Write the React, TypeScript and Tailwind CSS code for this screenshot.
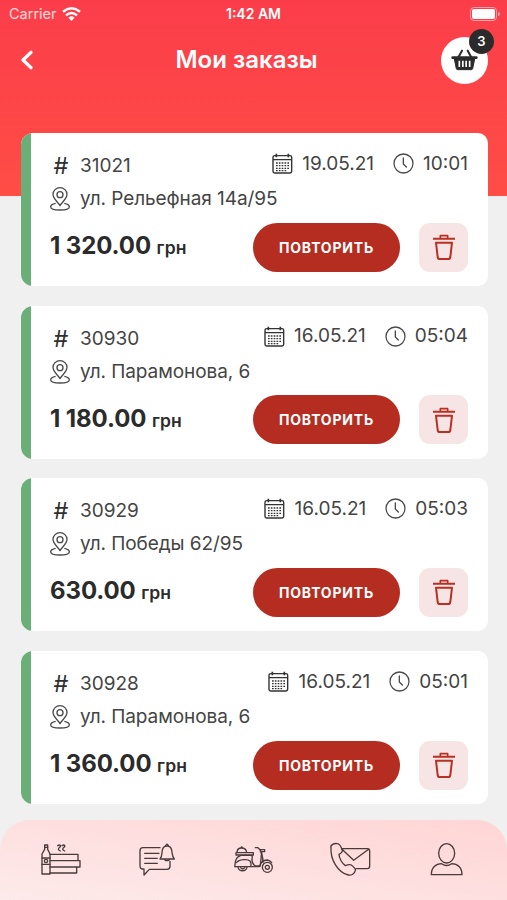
import React from 'react';

type Order = {
  id: string;
  date: string;
  time: string;
  address: string;
  price: string;
};

const ORDERS: Order[] = [
  { id: '31021', date: '19.05.21', time: '10:01', address: 'ул. Рельефная 14а/95', price: '1 320.00' },
  { id: '30930', date: '16.05.21', time: '05:04', address: 'ул. Парамонова, 6', price: '1 180.00' },
  { id: '30929', date: '16.05.21', time: '05:03', address: 'ул. Победы 62/95', price: '630.00' },
  { id: '30928', date: '16.05.21', time: '05:01', address: 'ул. Парамонова, 6', price: '1 360.00' },
];

const PinIcon: React.FC = () => (
  <svg width="20" height="24" viewBox="0 0 60 72" fill="none" stroke="#4a4a4a" strokeWidth="4" strokeLinejoin="round">
    <path d="M30 56C25 46 9 36 9 22a21 20 0 0 1 42 0c0 14-16 24-21 34z" />
    <circle cx="30" cy="23" r="9" />
    <path d="M17 49C8 51 2 54 2 59c0 6 12 10 28 10s28-4 28-10c0-5-6-8-15-10" />
  </svg>
);

const CalendarIcon: React.FC = () => (
  <svg width="21" height="21" viewBox="0 0 63 63" fill="none" stroke="#333" strokeWidth="4.2">
    <rect x="3" y="8" width="56" height="52" rx="5" />
    <path d="M3 20h56" />
    <path d="M13 2v11M49 2v11" strokeWidth="5" />
    <path d="M12 30h40M12 38h40M12 46h40M12 53h32" strokeWidth="4" strokeDasharray="5 3.5" />
  </svg>
);

const ClockIcon: React.FC = () => (
  <svg width="21" height="21" viewBox="0 0 63 63" fill="none" stroke="#4a4a4a" strokeWidth="3.8" strokeLinecap="round">
    <circle cx="31.500" cy="31.500" r="28.500" />
    <path d="M31 15v18l9 9" strokeWidth="4" />
  </svg>
);

const TrashIcon: React.FC = () => (
  <svg width="24" height="26" viewBox="0 0 72 78" fill="none" stroke="#b83024" strokeWidth="6" strokeLinejoin="round">
    <path d="M3 14h66" />
    <path d="M25 12V5h22v7" strokeWidth="5" />
    <path d="M12 26h48l-5 43q-1 6-6 6H23q-5 0-6-6z" />
  </svg>
);

const BasketIcon: React.FC = () => (
  <svg width="27" height="22" viewBox="0 0 81 66" fill="none" stroke="#2b2b2b" strokeLinecap="round" strokeLinejoin="round">
    <path d="M33 5L22 25M50 5l11 20" strokeWidth="6" />
    <path d="M5 26h71" strokeWidth="8" />
    <path d="M10 30l6 29q1 3 4 3h41q3 0 4-3l6-29z" fill="#2b2b2b" stroke="#2b2b2b" strokeWidth="3" />
    <path d="M25 35v19M35.500 35v19M45.500 35v19M56 35v19" stroke="#fff" strokeWidth="5" strokeLinecap="butt" />
  </svg>
);

const WifiIcon: React.FC = () => (
  <svg width="19" height="14" viewBox="0 0 57 42" fill="none" stroke="#fff" strokeWidth="7.500">
    <path d="M3 14Q28.500-6 54 14" />
    <path d="M12 25Q28.500 11 45 25" />
    <path d="M28.500 42l-9-10q9-8 18 0z" fill="#fff" stroke="none" />
  </svg>
);

const NavIcon: React.FC<{ viewBox: string; children: React.ReactNode }> = ({ viewBox, children }) => (
  <button className="flex flex-1 justify-center">
    <svg width="44" height="36" viewBox={viewBox} fill="none" stroke="#4a3a3a" strokeWidth="4" strokeLinejoin="round" strokeLinecap="round">
      {children}
    </svg>
  </button>
);

const OrderCard: React.FC<{ order: Order }> = ({ order }) => (
  <article className="h-[153px] rounded-r-[10px] rounded-l-[12px] bg-white flex overflow-hidden">
    <div className="w-[10px] shrink-0 bg-[#6aae78]" />
    <div className="flex-1 flex flex-col pl-[19px] pr-[19.5px]">
      <div className="flex items-center justify-between pt-[15px] text-[19px] leading-[30px] text-[#444]">
        <div className="flex items-center pt-[3px]">
          <span className="w-[30.5px] pl-[4px] text-[23.5px] leading-[30px] text-[#2f2f2f]">#</span>
          <span>{order.id}</span>
        </div>
        <div className="flex items-center -mt-[2px]">
          <CalendarIcon />
          <span className="ml-[9.5px]">{order.date}</span>
          <span className="ml-[19px]"><ClockIcon /></span>
          <span className="ml-[9px]">{order.time}</span>
        </div>
      </div>
      <div className="flex items-center mt-[2px] text-[19px] leading-[32px] tracking-[-0.08px] text-[#444]">
        <PinIcon />
        <span className="ml-[10.5px]">{order.address}</span>
      </div>
      <div className="flex items-center mt-[7.5px] text-[#2b2b2b]">
        <p className="flex-1 pl-[0.5px] text-[24px] leading-[30px] font-bold tracking-[-0.1px] whitespace-nowrap">
          {order.price} <span className="text-[17.5px] font-semibold tracking-[0.1px]">грн</span>
        </p>
        <button className="w-[147px] h-[49px] rounded-full bg-[#b52d20] text-white text-[14px] font-bold tracking-[0.8px]">ПОВТОРИТЬ</button>
        <button className="ml-[19px] w-[49px] h-[49px] rounded-[11px] bg-[#f7e4e4] flex items-center justify-center">
          <TrashIcon />
        </button>
      </div>
    </div>
  </article>
);

const App: React.FC = () => (
  <div className="h-[900px] w-[507px] overflow-hidden bg-[#f0f0f0] flex flex-col font-['Inter',sans-serif]">
    {/* Header */}
    <header className="h-[196px] shrink-0 bg-gradient-to-b from-[#fb3d4a] to-[#ff4d45] text-white">
      <div className="grid grid-cols-3 items-center h-[27px] px-[9px] text-[14.5px]">
        <div className="flex items-center gap-[5px] text-white/80">
          Carrier <WifiIcon />
        </div>
        <span className="text-center text-[14px] font-semibold">1:42 AM</span>
        <div className="flex items-center justify-end -mr-[2px]">
          <div className="w-[27px] h-[14px] rounded-[4px] border border-white/50 p-[1px]">
            <div className="h-full rounded-[2px] bg-white" />
          </div>
          <div className="ml-[1px] w-[2px] h-[4px] rounded-r-full bg-white/50" />
        </div>
      </div>
      <div className="flex items-center justify-between h-[66px] pl-[20px] pr-[19px]">
        <button className="w-[32px]">
          <svg width="14" height="20" viewBox="0 0 42 60" fill="none" stroke="#fff" strokeWidth="10" strokeLinecap="round" strokeLinejoin="round">
            <path d="M33 7L9 30l24 23" />
          </svg>
        </button>
        <h1 className="text-[24px] font-semibold">Мои заказы</h1>
        <button className="relative w-[47px] h-[47px] rounded-full bg-white flex items-center justify-center">
          <BasketIcon />
          <span className="absolute left-[28px] -top-[7.5px] w-[25px] h-[25px] rounded-full bg-[#2b2b2b] text-[13px] font-semibold flex items-center justify-center">3</span>
        </button>
      </div>
    </header>

    {/* Orders */}
    <main className="-mt-[63px] flex-1 pl-[20.5px] pr-[19.5px] flex flex-col gap-[19.7px]">
      {ORDERS.map(order => <OrderCard key={order.id} order={order} />)}
    </main>

    {/* Bottom navigation */}
    <nav className="h-[80.5px] shrink-0 rounded-t-[30px] bg-gradient-to-bl from-[#ffd5d5] to-[#fdeaea] px-[13px] pt-[22px] flex items-start">
      <NavIcon viewBox="118 96 132 108">
        <path d="M135 105h9v13l7 14v60h-24v-60l8-14z" />
        <path d="M135 112h9M127 144h24M127 163h24" />
        <circle cx="139" cy="153" r="5" />
        <path d="M151 133h84v19h-84M151 152h90v19h-90M151 171h80v18h-80" />
        <path d="M174 107c8-5 11 1 6 5s-6 8 2 11M187 107c8-5 11 1 6 5s-6 8 2 11" />
      </NavIcon>
      <NavIcon viewBox="407 96 132 108">
        <path d="M482 113h-51q-9 0-9 9v45q0 10 9 10h3v18l16-17h53q9 0 9-9v-15" />
        <path d="M436 130h43M436 145h38M436 160h38" />
        <path d="M482 147c7-8 5-16 7-27 2-9 8-12 14-12s12 3 14 12c2 11 1 19 8 27z" />
        <path d="M499 107q4-9 8 0M496 149q7 6 14 0" />
      </NavIcon>
      <NavIcon viewBox="127 96 132 108">
        <path d="M142 128c0-11 6-14 14-14s14 4 15 14M139 128h52v7h-52zM154 113q2-4 4 0" />
        <path d="M136 170c-1-16 3-30 18-34h30q4 0 4 5c-3 13 2 22 9 27h15l4-43" />
        <path d="M136 170h73q5-19 24-20 8 1 13 8M140 158c8-10 35-12 41-5q5 7 2 17" />
        <path d="M197 113h8l6 6q9 17 9 38M211 119h14v6h-13" />
        <circle cx="233" cy="172" r="15" />
        <circle cx="233" cy="172" r="6" />
        <path d="M145 172a14 14 0 0 0 27 0M153 173q6 8 12 0" />
      </NavIcon>
      <NavIcon viewBox="415 96 132 108">
        <path d="M456 116h77q7 0 7 7v45q0 8-7 8h-34M457 118l35 33 46-34" />
        <path d="M424 113c-3-9 10-14 19-12 9 1 12 11 15 20 1 5-3 8-10 12 0 12 10 28 19 34 7-3 13-5 18-2q14 11 12 17c-2 9-12 15-21 13-33-8-54-48-52-82z" />
      </NavIcon>
      <NavIcon viewBox="132 96 132 108">
        <ellipse cx="200" cy="130" rx="24" ry="29" />
        <path d="M154 194c0-21 13-33 31-33q15 11 30 0c18 0 31 12 31 33z" />
      </NavIcon>
    </nav>
  </div>
);

export default App;
